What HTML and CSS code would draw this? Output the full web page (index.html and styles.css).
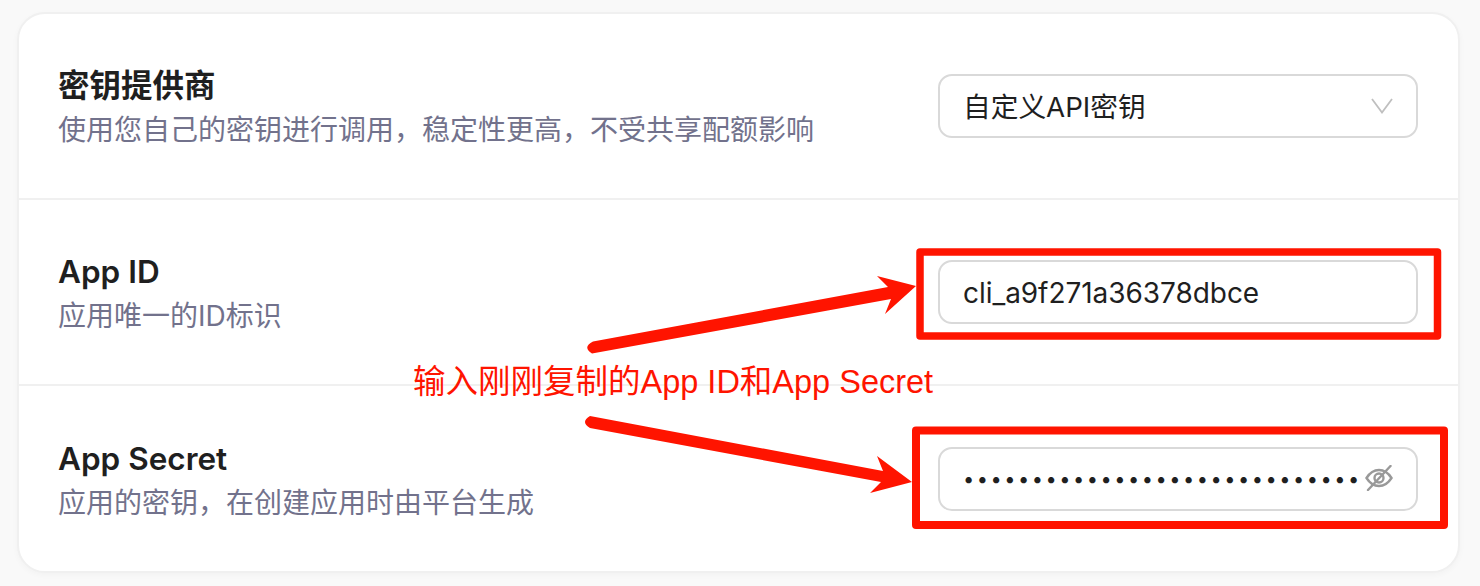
FILE: index.html
```html
<!DOCTYPE html>
<html lang="en">
<head>
    <meta charset="UTF-8">
    <title>密钥设置</title>
    <link rel="stylesheet" href="styles.css">
</head>
<body>
    <div class="card">
        <div class="row">
            <div class="info">
                <div class="title">密钥提供商</div>
                <div class="desc">使用您自己的密钥进行调用，稳定性更高，不受共享配额影响</div>
            </div>
            <div class="control">
                <span class="value">自定义API密钥</span>
                <svg class="chevron" viewBox="0 0 22 16" fill="none" stroke="#bfbfbf" stroke-width="1.8">
                    <path d="M1 1l10 13.500L21 1"/>
                </svg>
            </div>
        </div>
        <div class="row">
            <div class="info">
                <div class="title">App ID</div>
                <div class="desc">应用唯一的ID标识</div>
            </div>
            <div class="control">
                <input class="field" type="text" value="cli_a9f271a36378dbce">
            </div>
        </div>
        <div class="row">
            <div class="info">
                <div class="title">App Secret</div>
                <div class="desc">应用的密钥，在创建应用时由平台生成</div>
            </div>
            <div class="control">
                <input class="field secret" type="password" value="abcdefghijklmnopqrstuvwxyz012345">
                <svg class="eye" viewBox="0 0 28 26" fill="none" stroke="#999" stroke-width="2.400" stroke-linecap="round">
                    <path d="M1.500 13C5 7.500 9 5 14 5s9 2.500 12.500 8C23 18.500 19 21 14 21S5 18.500 1.500 13z"/>
                    <circle cx="14" cy="13" r="4.500"/>
                    <path d="M25.500 1L3 25"/>
                </svg>
            </div>
        </div>
    </div>

    <!-- red annotation drawn on top of the screenshot -->
    <svg class="marks" viewBox="0 0 1480 586">
        <rect x="920" y="252" width="517.500" height="84" fill="none" stroke="#ff1400" stroke-width="7.500" stroke-linejoin="round"/>
        <rect x="916" y="430.500" width="528" height="94.500" fill="none" stroke="#ff1400" stroke-width="8" stroke-linejoin="round"/>
        <path fill="#ff1400" d="M593 341.500Q582 347 592 353.500L891 299 885 314 916 286 877 276 888 287Z"/>
        <path fill="#ff1400" d="M590 416Q580 422 590 428L881 482 870 493 912 482 877 456 883 471Z"/>
    </svg>
    <div class="note">输入刚刚复制的App ID和App Secret</div>
</body>
</html>
```

FILE: styles.css
```css
* {
    box-sizing: border-box;
}

body {
    margin: 0;
    padding: 12px 20px 0 17px;
    height: 586px;
    overflow: hidden;
    background: #f9f9f9;
    font-family: Inter, "Noto Sans CJK SC", sans-serif;
    color: #1f1f1f;
}

.card {
    background: white;
    border: 2px solid #f0f0f0;
    border-radius: 28px;
    box-shadow: 0 2px 6px rgba(0,0,0,0.03);
}

.row {
    display: flex;
    align-items: center;
    justify-content: space-between;
    height: 186px;
    padding: 0 40px 0 39px;
    border-bottom: 2px solid #f0f0f0;
}

.row:last-child {
    border-bottom: none;
    height: 185px;
}

.info {
    padding-top: 6px;
}

.title {
    font-size: 31.500px;
    font-weight: 600;
    line-height: 42px;
}

.desc {
    font-size: 28px;
    line-height: 46px;
    color: #72728c;
}

.control {
    position: relative;
    display: flex;
    align-items: center;
    justify-content: space-between;
    width: 480px;
    height: 64px;
    padding: 0 23px;
    border: 2px solid #d9d9d9;
    border-radius: 14px;
    background: white;
}

.value {
    font-size: 27.700px;
    padding-bottom: 2px;
}

.chevron {
    width: 22px;
    height: 16px;
}

.field {
    flex: 1;
    min-width: 0;
    border: none;
    outline: none;
    padding: 1px 0 0;
    background: none;
    font-family: inherit;
    font-size: 28px;
    letter-spacing: -0.050px;
    color: #1f1f1f;
}

.secret {
    padding: 0;
    font-size: 20px;
    letter-spacing: 2.500px;
}

.eye {
    width: 28px;
    height: 26px;
    margin: -2px 0 0 6px;
}

.marks {
    position: absolute;
    left: 0;
    top: 0;
    width: 1480px;
    height: 586px;
}

.note {
    position: absolute;
    left: 413px;
    top: 362px;
    font-family: "Liberation Sans", "Noto Sans CJK SC", sans-serif;
    font-size: 32.500px;
    line-height: 40px;
    color: #ff1400;
    white-space: nowrap;
}
```
